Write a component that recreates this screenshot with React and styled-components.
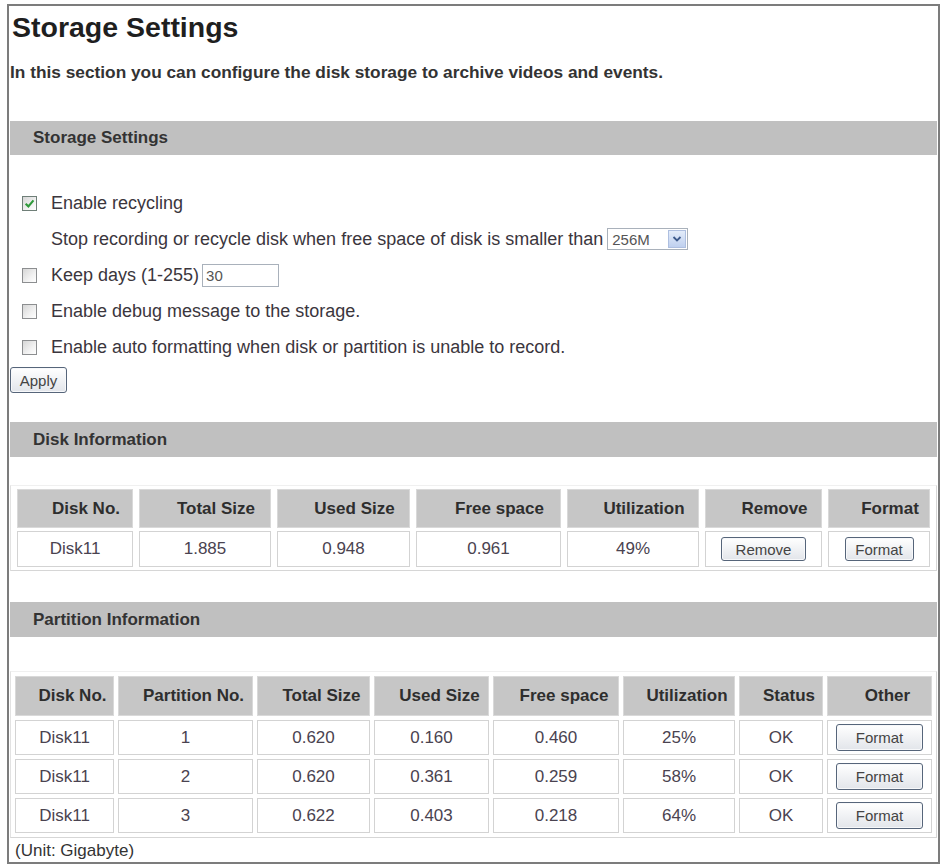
import React from "react";
import styled, { createGlobalStyle } from "styled-components";

const Global = createGlobalStyle`
  html, body { margin: 0; padding: 0; background: #fff; }
  body { font-family: "Liberation Sans", Arial, Helvetica, sans-serif; color: #333; }
`;

const Frame = styled.div`
  margin: 4px 0 0 7px;
  width: 933px;
  height: 860px;
  box-sizing: border-box;
  border: 2px solid #7c7c7c;
  padding: 0 1px;
`;

const Title = styled.h1`
  margin: 0;
  padding: 4px 0 0 2px;
  font-size: 28.5px;
  line-height: 34px;
  font-weight: bold;
  color: #1f1f1f;
`;

const Intro = styled.p`
  margin: 16px 0 0 0;
  font-size: 17.3px;
  line-height: 24px;
  font-weight: bold;
  color: #333;
`;

const SectionBar = styled.div`
  margin-top: ${(p) => p.$top}px;
  height: ${(p) => p.$h || 35}px;
  background: #c0c0c0;
  padding-left: 23px;
  display: flex;
  align-items: center;
  font-size: 17px;
  font-weight: bold;
  color: #333;
`;

const Form = styled.div`
  margin-top: 30px;
  display: flex;
  flex-direction: column;
`;

const OptionRow = styled.div`
  height: 36px;
  display: flex;
  align-items: center;
  gap: 14px;
  padding-left: ${(p) => (p.$indent ? 41 : 12)}px;
  font-size: 18px;
  color: #3b363d;
`;

const Label = styled.span`
  display: inline-flex;
  align-items: center;
  gap: ${(p) => p.$gap || 0}px;
`;

const Box = styled.span`
  width: 15px;
  height: 15px;
  box-sizing: border-box;
  border: 1px solid ${(p) => (p.$checked ? "#6f7f78" : "#8c8e90")};
  background: linear-gradient(135deg, #d6d6d6 0%, #f1f1f1 60%, #ffffff 100%);
  display: inline-flex;
  align-items: center;
  justify-content: center;
  flex: none;
`;

const Select = styled.span`
  width: 81px;
  height: 22px;
  box-sizing: border-box;
  border: 1px solid #a9b1bb;
  display: inline-flex;
  align-items: center;
  justify-content: space-between;
  padding: 1px 1px 1px 4px;
  font-size: 15px;
  color: #555;
  background: #fff;
`;

const SelectArrow = styled.span`
  width: 18px;
  height: 18px;
  box-sizing: border-box;
  border: 1px solid #aebfe0;
  background: linear-gradient(#e3ecfa, #bfd0ef);
  display: inline-flex;
  align-items: center;
  justify-content: center;
`;

const TextInput = styled.input`
  width: 77px;
  height: 23px;
  box-sizing: border-box;
  border: 1px solid #a9b1bb;
  padding: 0 3px;
  font-family: inherit;
  font-size: 15px;
  color: #555;
  outline: none;
`;

const Button = styled.button`
  width: ${(p) => p.$w}px;
  height: ${(p) => p.$h}px;
  margin: 0;
  padding: 0;
  box-sizing: border-box;
  border: 1px solid #56657a;
  border-radius: 3px;
  background: linear-gradient(#ffffff, #e2e5ea);
  box-shadow: inset 0 0 0 1px #f7f8fa;
  font-family: inherit;
  font-size: 15px;
  color: #444;
  cursor: pointer;
`;

const ApplyButton = styled(Button)`
  margin-top: 2px;
  align-self: flex-start;
`;

const DataTable = styled.table`
  margin-top: ${(p) => p.$top}px;
  width: 927px;
  table-layout: fixed;
  border-collapse: separate;
  border-spacing: ${(p) => p.$sx}px ${(p) => p.$sy}px;
  border: 1px solid #d6d6d6;
  border-top-color: #f0f0f0;
  border-left-color: #e2e2e2;
`;

const Col = styled.col`
  width: ${(p) => p.$w}px;
`;

const HeadCell = styled.th`
  height: ${(p) => p.$h}px;
  box-sizing: border-box;
  background: #c6c6c6;
  border: 1px solid #d9d9d9;
  padding: 0 0 0 ${(p) => p.$shift}px;
  text-align: center;
  font-size: 17px;
  font-weight: bold;
  color: #2e2e2e;
  white-space: nowrap;
`;

const Cell = styled.td`
  height: ${(p) => p.$h}px;
  box-sizing: border-box;
  border: 1px solid #d3d3d3;
  padding: 0;
  text-align: center;
  font-size: 17px;
  color: #4a4350;
  white-space: nowrap;
`;

const Unit = styled.div`
  margin-top: 1px;
  padding-left: 5px;
  font-size: 17px;
  line-height: 24px;
  color: #333;
`;

function Check({ checked }) {
  return (
    <Box $checked={checked}>
      {checked && (
        <svg width="11" height="11" viewBox="0 0 10 10">
          <path d="M1.5 5.2 L4 7.6 L8.6 2.2" fill="none" stroke="#2e9a3a" strokeWidth="1.9" />
        </svg>
      )}
    </Box>
  );
}

const diskCols = [116, 132, 133, 145, 132, 117, 102];
const partCols = [99, 135, 113, 115, 126, 112, 84, 105];

const partitions = [
  ["Disk11", "1", "0.620", "0.160", "0.460", "25%", "OK"],
  ["Disk11", "2", "0.620", "0.361", "0.259", "58%", "OK"],
  ["Disk11", "3", "0.622", "0.403", "0.218", "64%", "OK"],
];

export default function App() {
  return (
    <>
      <Global />
      <Frame>
        <Title>Storage Settings</Title>
        <Intro>In this section you can configure the disk storage to archive videos and events.</Intro>

        <SectionBar $top={37} $h={34}>Storage Settings</SectionBar>
        <Form>
          <OptionRow>
            <Check checked />
            <span>Enable recycling</span>
          </OptionRow>
          <OptionRow $indent>
            <Label $gap={4}>
              Stop recording or recycle disk when free space of disk is smaller than
              <Select>
                256M
                <SelectArrow>
                  <svg width="10" height="8" viewBox="0 0 10 8">
                    <path d="M1.5 2 L5 5.5 L8.5 2" fill="none" stroke="#3d5a8c" strokeWidth="1.8" />
                  </svg>
                </SelectArrow>
              </Select>
            </Label>
          </OptionRow>
          <OptionRow>
            <Check />
            <Label $gap={3}>
              Keep days (1-255)
              <TextInput defaultValue="30" />
            </Label>
          </OptionRow>
          <OptionRow>
            <Check />
            <span>Enable debug message to the storage.</span>
          </OptionRow>
          <OptionRow>
            <Check />
            <span>Enable auto formatting when disk or partition is unable to record.</span>
          </OptionRow>
          <ApplyButton $w={57} $h={26}>Apply</ApplyButton>
        </Form>

        <SectionBar $top={29}>Disk Information</SectionBar>
        <DataTable $top={28} $sx={6} $sy={3}>
          <colgroup>
            {diskCols.map((w, i) => (
              <Col key={i} $w={w} />
            ))}
          </colgroup>
          <thead>
            <tr>
              {["Disk No.", "Total Size", "Used Size", "Free space", "Utilization", "Remove", "Format"].map((h) => (
                <HeadCell key={h} $h={39} $shift={22}>{h}</HeadCell>
              ))}
            </tr>
          </thead>
          <tbody>
            <tr>
              <Cell $h={36}>Disk11</Cell>
              <Cell $h={36}>1.885</Cell>
              <Cell $h={36}>0.948</Cell>
              <Cell $h={36}>0.961</Cell>
              <Cell $h={36}>49%</Cell>
              <Cell $h={36}>
                <Button $w={85} $h={24}>Remove</Button>
              </Cell>
              <Cell $h={36}>
                <Button $w={69} $h={24}>Format</Button>
              </Cell>
            </tr>
          </tbody>
        </DataTable>

        <SectionBar $top={31}>Partition Information</SectionBar>
        <DataTable $top={34} $sx={4} $sy={4}>
          <colgroup>
            {partCols.map((w, i) => (
              <Col key={i} $w={w} />
            ))}
          </colgroup>
          <thead>
            <tr>
              {["Disk No.", "Partition No.", "Total Size", "Used Size", "Free space", "Utilization", "Status", "Other"].map((h) => (
                <HeadCell key={h} $h={40} $shift={16}>{h}</HeadCell>
              ))}
            </tr>
          </thead>
          <tbody>
            {partitions.map((row, r) => (
              <tr key={r}>
                {row.map((v, c) => (
                  <Cell key={c} $h={35}>{v}</Cell>
                ))}
                <Cell $h={35}>
                  <Button $w={87} $h={27}>Format</Button>
                </Cell>
              </tr>
            ))}
          </tbody>
        </DataTable>
        <Unit>(Unit: Gigabyte)</Unit>
      </Frame>
    </>
  );
}
